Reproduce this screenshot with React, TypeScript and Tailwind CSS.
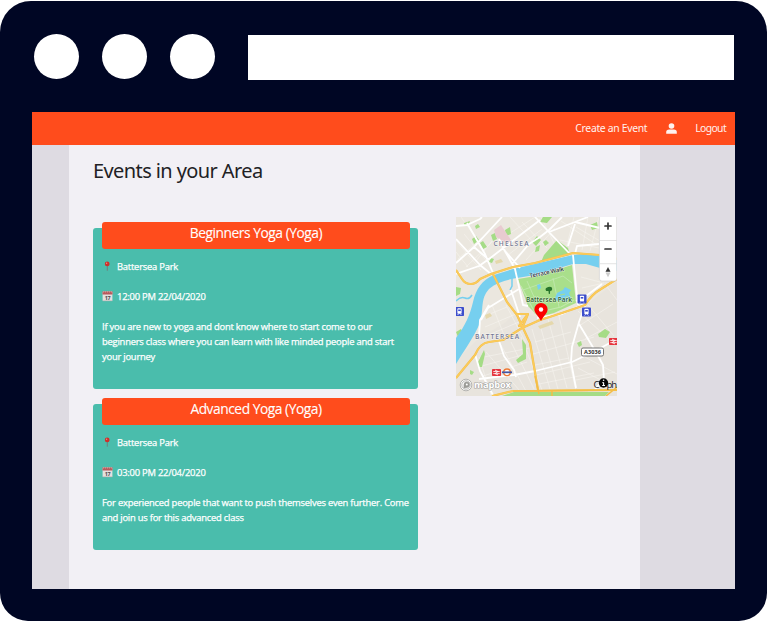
import React from "react";

type YogaEvent = { title: string; place: string; time: string; lines: string[]; height: string };

const events: YogaEvent[] = [
  {
    title: "Beginners Yoga (Yoga)",
    place: "Battersea Park",
    time: "12:00 PM 22/04/2020",
    lines: [
      "If you are new to yoga and dont know where to start come to our",
      "beginners class where you can learn with like minded people and start",
      "your journey",
    ],
    height: "h-[161px]",
  },
  {
    title: "Advanced Yoga (Yoga)",
    place: "Battersea Park",
    time: "03:00 PM 22/04/2020",
    lines: [
      "For experienced people that want to push themselves even further. Come",
      "and join us for this advanced class",
    ],
    height: "h-[146px]",
  },
];

function PinIcon() {
  return (
    <svg className="h-[11px] w-[11px]" viewBox="0 0 11 11">
      <path d="M5.3 4.5v5.2" stroke="#6f7f7c" strokeWidth="1" />
      <circle cx="5.2" cy="2.9" r="2.4" fill="#cf2f2b" />
      <circle cx="4.6" cy="2.2" r="0.7" fill="#f08b7e" />
    </svg>
  );
}

function CalendarIcon() {
  return (
    <svg className="h-[11px] w-[11px]" viewBox="0 0 11 11">
      <rect x="0.6" y="0.6" width="9.8" height="9.4" rx="0.6" fill="#e4e0df" />
      <path d="M0.5 0.4h10v3.1h-10z" fill="#b9595b" />
      <path d="M1.4 0.1v1.6M3.4 0.1v1.6M5.5 0.1v1.6M7.6 0.1v1.6M9.6 0.1v1.6" stroke="#e3b9b3" strokeWidth="0.5" />
      <text x="5.5" y="8.6" textAnchor="middle" fontSize="5.4" fontWeight="700" fontFamily="Open Sans, sans-serif" fill="#4b4b50">17</text>
      <path d="M0.6 9.8h9.8" stroke="#aaa" strokeWidth="0.6" />
    </svg>
  );
}

function EventCard({ event }: { event: YogaEvent }) {
  return (
    <article className={`${event.height} w-[325px] rounded-[3px] bg-[#4abdac] px-[9px] text-[9.4px] leading-[15px] tracking-[-0.215px] text-white [-webkit-text-stroke:0.25px_#fff]`}>
      <h2 className="-mt-[6px] h-[27px] w-[308px] rounded-[3px] bg-[#ff4c1c] text-center text-[13.8px] leading-[22px] font-normal tracking-[-0.47px] [-webkit-text-stroke:0.1px_#fff]">{event.title}</h2>
      <p className="mt-[10px] flex h-[15px] items-center gap-[4px]">
        <PinIcon />
        <span>{event.place}</span>
      </p>
      <p className="mt-[15px] flex h-[15px] items-center gap-[4px]">
        <CalendarIcon />
        <span>{event.time}</span>
      </p>
      <p className="mt-[15px] whitespace-nowrap">
        {event.lines.map((line) => (
          <span key={line} className="block">{line}</span>
        ))}
      </p>
    </article>
  );
}

function Station({ x, y }: { x: number; y: number }) {
  return (
    <g transform={`translate(${x} ${y})`}>
      <rect width="9" height="9" rx="0.8" fill="#3d4ecc" />
      <rect x="2.4" y="1.3" width="4.2" height="5.4" rx="0.8" fill="#fff" />
      <rect x="3.2" y="2.5" width="2.6" height="1.6" fill="#3d4ecc" />
      <path d="M2.6 8l1-1.2M6.4 8l-1-1.2" stroke="#fff" strokeWidth="0.8" />
    </g>
  );
}

function RailBadge({ x, y }: { x: number; y: number }) {
  return (
    <g transform={`translate(${x} ${y})`}>
      <rect width="9" height="7" rx="0.8" fill="#e5343d" />
      <path d="M1.3 2.5h6.4M1.3 4.6h6.4M3 1.1l3 1.4-3 2.1 3 1.3" stroke="#fff" strokeWidth="0.8" fill="none" />
    </g>
  );
}

function AreaMap() {
  return (
    <svg className="block h-[179px] w-[161px]" viewBox="0 0 161 179" fontFamily="Open Sans, Noto Sans, sans-serif">
      <rect width="161" height="179" fill="#ebe7df" />
      <path d="M0 144L22 122 50 105 61 94 84 101 130 88 161 64V179H0z" fill="#e8e4dd" />
      {/* minor streets */}
      <g stroke="#f8f6f2" strokeOpacity="0.7" strokeWidth="0.7" fill="none">
        <path d="M5 0l14 20M0 24l25 29M8 17l26 31M2 42l27-24M10 50l31-30M54 0l24 26M42 25l20 30M48 20l31-20M52 38l34-26M70 43l29-32M66 5l25 26M85 0l17 34M105 4l36 24M118 0l-8 32M132 0l-6 33M143 0l-9 34M104 23l39 8M120 10l24 14M0 35l12 15M20 44l16-20" />
        <path d="M36 88l14 35M29 99l22-9M29 110l31-13M30 119l40-17M50 88l20 38M23 140l12 38M30 135l34 39M45 128l26 48M55 125l23 47M65 120l21 53M27 159l44-14M22 150l48-13M28 140l46-9M76 112l18 60M84 108l18 64M92 102l19 69M103 99l17 75M79 125l36-10M77 137l61-17M79 148l34-7M80 158l54-13M83 167l55-11M122 94l36 33M132 88l26 31M123 109l34-22M129 122l32-17M127 139l34 18M122 151l34 18M120 163l39-8M149 67l12 16M126 71l22-5M125 60l19 5" />
      </g>
      {/* small green spaces */}
      <g fill="#a5dc86">
        <path d="M16 22l4-3 3 4-5 4zM24 26l3-2 4 6-4 2zM35 18l4-2 2 6-4 2zM49 13l5-3 1 7-5 2zM35 41l3 1-2 4-3-1zM19 9l3-2 2 3-4 2zM76 25l5-6 4 4-5 6zM80 30l4-2-1 6-4 1zM87 0h9l-5 6-7-1zM88 38l13-15 11 8 2 7-29 7zM134 8l7-3 1 6-6 2zM8 6l6-2-1 3-5 2zM0 70l5 1-1 6-4 2zM87 25l3-2 3 3-4 3z" />
        <path d="M22 145l6-12 1 4-3 13-4 0zM60 143l7-6-1-15 4 6v14l-8 4zM142 117l7-5 5 3-4 6-7-1zM121 126l4-2 1 4-3 2zM14 153l4 2-2 3-2-1zM0 115l5-3 2 4-5 4z" />
      </g>
      <path d="M38 13l7-5 10 15-3 4-12-7z" fill="#e8cbd0" />
      <path d="M82 109l14-5 2 3-14 5z" fill="#e5d8ac" />
      <path d="M29 98l5-2 2 3-6 3zM39 44l6-2 2 3-7 2z" fill="#e5d8ac" />
      {/* river */}
      <path d="M161 41L144 39 128 37 117 38 79 47 57 52 38 58C26 63 20 72 17 85C14 98 9 109 0 121V147C7 135 17 122 24 106C28 92 24 82 33 72C41 65 50 63 61 61L79 58 117 47 130 47 144 51 161 54z" fill="#76cfef" />
      <path d="M56 60v9l-2 4M0 84q5-5 9-3t7-3" stroke="#76cfef" strokeWidth="1.5" fill="none" />
      {/* park */}
      <path d="M62 62L80 59 116 48 120 86 98 96 83 100 72 89z" fill="#a9df8b" />
      <path d="M65 69L79 96 105 90 118 83" stroke="#c1e8ac" strokeWidth="1.2" fill="none" />
      <path d="M67 73l40-14 9 7M71 64l11 25M97 61l6 29" stroke="#c6e9b6" strokeWidth="0.7" fill="none" />
      <path d="M99 81l2-5 6-3 2-3 6 3-2 3 2 5-6 4-5-2-3 1zM81 68l3-1 1 4-3 2z" fill="#76cfef" />
      <path d="M104 78l5-1M109 81l3-2" stroke="#a9df8b" strokeWidth="1" />
      {/* main streets */}
      <g stroke="#fff" strokeWidth="1.8" fill="none" strokeLinejoin="round">
        <path d="M0 9L11 8 24 2 26 0M0 22L24 48 35 57M11 6L29 37 37 56M0 57L23 49 33 42 84 3M0 46L18 30 46 0M18 30L32 42M49 34L59 52 67 88 72 89M43 22L49 34 64 51M56 47L73 27 84 20 93 13 106 0M79 0L91 13 114 37M93 15L119 5 132 0M119 5L144 11M119 7L112 29M117 38L120 70 122 88M143 27l-22 2-2 8" />
        <path d="M25 103L32 91 63 72M33 88L24 103 23 119M19 137L24 154 37 178M43 124L48 139 58 153 60 160M23 162L58 158 79 154 116 145 141 133 161 122M130 86L123 105 116 130 115 145 120 171M123 107L141 137 147 148 148 163 139 172M81 101L106 97 130 86M120 84L130 79 146 67M55 73l9 27" />
      </g>
      <g fill="none" strokeLinejoin="round">
        <path d="M0 53L6 62Q9 67 15 67Q20 67 24 62L35 57 57 50 79 46 117 36 144 38 161 42M37 57L51 85 61 98 74 126 82 173M0 161L19 138Q24 126 33 125L47 123 66 111 84 103 106 96 129 88Q136 77 145 72L161 62M61 97H72L67 109H63L72 97M36 179L57 174 161 173" stroke="#efbd50" strokeWidth="2.2" />
        <path d="M0 53L6 62Q9 67 15 67Q20 67 24 62L35 57 57 50 79 46 117 36 144 38 161 42M37 57L51 85 61 98 74 126 82 173M0 161L19 138Q24 126 33 125L47 123 66 111 84 103 106 96 129 88Q136 77 145 72L161 62M61 97H72L67 109H63L72 97M36 179L57 174 161 173" stroke="#fccb59" strokeWidth="1.5" />
      </g>
      <path d="M46 179l12-4h95l-4 4z" fill="#a5dc86" />
      <path d="M57 174L161 173M96 174v5M150 179l11-9M79 159l4 18" stroke="#f4bd45" strokeWidth="1.5" />
      {/* labels */}
      <g stroke="#fff" strokeOpacity="0.6" strokeWidth="0.9" paintOrder="stroke">
        <text x="37.5" y="29" fontSize="6.6" textLength="35" fill="#747894" fontWeight="600">CHELSEA</text>
        <text x="19" y="122" fontSize="6.6" textLength="44" fill="#747894" fontWeight="600">BATTERSEA</text>
        <text transform="translate(74 61) rotate(-12)" fontSize="6" textLength="35" fill="#2c3440" fontWeight="600">Terrace Walk</text>
        <text x="70" y="84.5" fontSize="6.5" textLength="46" fill="#2c5c2b" fontWeight="600">Battersea Park</text>
      </g>
      <path d="M90.2 74q-2-3 2-4 4-1 4 2 0 2-2 2l-.4 3h-1l-.3-3z" fill="#28752c" />
      <Station x={121.5} y={77.5} />
      <Station x={126} y={90.5} />
      <Station x={-1} y={90} />
      <RailBadge x={36} y={152} />
      <RailBadge x={153} y={121} />
      <circle cx="51" cy="155.3" r="3.3" fill="#fff" stroke="#ed7a35" strokeWidth="1.4" />
      <path d="M46 155.3h10" stroke="#4356a4" strokeWidth="1.8" />
      <rect x="125.5" y="131" width="22" height="8" rx="1.5" fill="#fff" stroke="#666" strokeWidth="0.9" />
      <text x="136.5" y="137.2" fontSize="5.6" textAnchor="middle" textLength="17" fill="#333" fontWeight="700">A3036</text>
      {/* mapbox mark */}
      <g stroke="#9a9a97" strokeWidth="0.7">
        <circle cx="10" cy="168" r="5.8" fill="#fff" />
        <circle cx="10" cy="168" r="4.2" fill="#fff" />
        <path d="M8 171v-3.3a2.7 2.7 0 112.7 2.7z" fill="#9c9c98" />
        <circle cx="10.8" cy="167.4" r="1" fill="#fff" stroke="none" />
      </g>
      <text x="18" y="171" fontSize="9.4" textLength="37" fill="#fff" stroke="#a3a3a0" strokeWidth="1.2" paintOrder="stroke" fontWeight="700">mapbox</text>
      <text x="137.5" y="170.5" fontSize="9.5" fill="#222" fontWeight="500">C</text>
      <text x="150.5" y="170.5" fontSize="9.5" textLength="10.5" fill="#222" fontWeight="500">ph</text>
      <circle cx="147.5" cy="166" r="4.7" fill="#080808" />
      <path d="M147.6 165.6v2.8M146.4 165.6h1.2M146.2 168.5h2.8" stroke="#fff" strokeWidth="1.1" />
      <circle cx="147.6" cy="163.3" r="0.8" fill="#fff" />
      {/* marker */}
      <path d="M85 104C82 98 78.4 96.2 78.4 92.5a6.6 6.6 0 0113.2 0C91.6 96.2 88 98 85 104z" fill="#fb0000" />
      <circle cx="85" cy="92.5" r="2.2" fill="#fff" />
      {/* zoom controls */}
      <rect x="143.4" y="-3" width="17.4" height="67" rx="2.5" fill="#fff" stroke="#ccc" strokeWidth="0.6" />
      <path d="M143.5 23.5h17M143.5 46.7h17" stroke="#d8d8d8" strokeWidth="0.7" />
      <path d="M149 9h6M152 6v6M149 32h6" stroke="#333" strokeWidth="1.7" strokeLinecap="round" />
      <path d="M152 50l2.5 4.7h-5z" fill="#333" />
      <path d="M152 60.3l2.5-4.7h-5z" fill="#ccc" />
    </svg>
  );
}

export default function App() {
  return (
    <div className="h-[621px] w-[768px] overflow-hidden bg-white pt-px pr-px font-['Open_Sans',sans-serif]">
      <div className="h-[620px] w-[767px] rounded-t-[31px] rounded-b-[28px] bg-[#000624]">
        <div className="flex h-[111px] items-start pt-[33px] pl-[34px]">
          <div className="flex gap-[23px]">
            <span className="h-[45px] w-[45px] rounded-full bg-white" />
            <span className="h-[45px] w-[45px] rounded-full bg-white" />
            <span className="h-[45px] w-[45px] rounded-full bg-white" />
          </div>
          <div className="mt-px ml-[33px] h-[45px] w-[486px] bg-white" />
        </div>
        <main className="ml-8 h-[477px] w-[703px] bg-[#dedbe2]">
          <nav className="flex h-[33px] items-center justify-end bg-[#ff4c1c] pt-px pr-[9px] font-['Noto_Sans',sans-serif] text-[10.4px] tracking-[-0.32px] text-[#fff2ef]">
            <span>Create an Event</span>
            <svg className="mr-[18px] ml-[19px] h-[11px] w-[11px] -translate-y-px" viewBox="0 0 11 11" fill="currentColor">
              <circle cx="5.5" cy="3" r="2.8" />
              <path d="M0.2 10.7V9q0-2.5 3-2.5h4.6q3 0 3 2.5v1.7z" />
            </svg>
            <span className="tracking-[-0.64px]">Logout</span>
          </nav>
          <section className="ml-[37px] flex h-[444px] w-[571px] bg-[#f2f0f5] pl-[24px]">
            <div className="w-[325px]">
              <h1 className="h-[83px] pt-[11px] font-['Noto_Sans',sans-serif] text-[20px] leading-[30px] tracking-[-0.6px] whitespace-nowrap text-[#212124]">Events in your Area</h1>
              <div className="flex flex-col gap-[15px]">
                {events.map((event) => (
                  <EventCard key={event.title} event={event} />
                ))}
              </div>
            </div>
            <aside className="ml-[38px] pt-[72px]">
              <AreaMap />
            </aside>
          </section>
        </main>
      </div>
    </div>
  );
}
